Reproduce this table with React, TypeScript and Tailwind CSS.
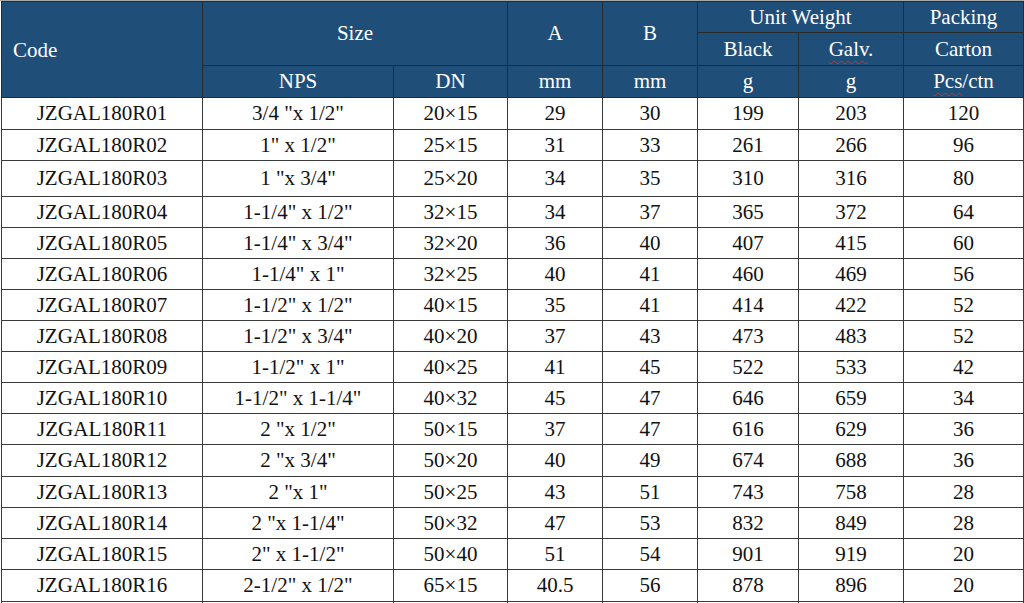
import React from "react";

const rows: [string, string, string, string, string, string, string, string, number][] = [
  ["JZGAL180R01", '3/4 "x 1/2"', "20×15", "29", "30", "199", "203", "120", 32],
  ["JZGAL180R02", '1" x 1/2"', "25×15", "31", "33", "261", "266", "96", 31],
  ["JZGAL180R03", '1 "x 3/4"', "25×20", "34", "35", "310", "316", "80", 36],
  ["JZGAL180R04", '1-1/4" x 1/2"', "32×15", "34", "37", "365", "372", "64", 31],
  ["JZGAL180R05", '1-1/4" x 3/4"', "32×20", "36", "40", "407", "415", "60", 31],
  ["JZGAL180R06", '1-1/4" x 1"', "32×25", "40", "41", "460", "469", "56", 31],
  ["JZGAL180R07", '1-1/2" x 1/2"', "40×15", "35", "41", "414", "422", "52", 31],
  ["JZGAL180R08", '1-1/2" x 3/4"', "40×20", "37", "43", "473", "483", "52", 31],
  ["JZGAL180R09", '1-1/2" x 1"', "40×25", "41", "45", "522", "533", "42", 31],
  ["JZGAL180R10", '1-1/2" x 1-1/4"', "40×32", "45", "47", "646", "659", "34", 31],
  ["JZGAL180R11", '2 "x 1/2"', "50×15", "37", "47", "616", "629", "36", 31],
  ["JZGAL180R12", '2 "x 3/4"', "50×20", "40", "49", "674", "688", "36", 32],
  ["JZGAL180R13", '2 "x 1"', "50×25", "43", "51", "743", "758", "28", 31],
  ["JZGAL180R14", '2 "x 1-1/4"', "50×32", "47", "53", "832", "849", "28", 31],
  ["JZGAL180R15", '2" x 1-1/2"', "50×40", "51", "54", "901", "919", "20", 31],
  ["JZGAL180R16", '2-1/2" x 1/2"', "65×15", "40.5", "56", "878", "896", "20", 32],
];

const serif = "font-['Liberation_Serif','Times_New_Roman',serif]";
const th = `border border-[#2a2a2a] font-normal text-white p-0 leading-none ${serif}`;
const td = `border border-[#3a3a3a] text-center text-[#111] p-0 leading-none ${serif}`;

export default function App() {
  return (
    <div className={`w-[1024px] h-[603px] overflow-hidden bg-white ${serif}`}>
      <div className="h-[1px] bg-[#a8a8a8]" />
      <table className={`table-fixed border-collapse ml-[1px] text-[21px] w-[1022px] ${serif}`}>
        <colgroup>
          <col className="w-[201px]" />
          <col className="w-[191px]" />
          <col className="w-[114px]" />
          <col className="w-[95px]" />
          <col className="w-[95px]" />
          <col className="w-[101px]" />
          <col className="w-[105px]" />
          <col className="w-[120px]" />
        </colgroup>
        <thead className="bg-[#1f4e79]">
          <tr className="h-[31px]">
            <th rowSpan={3} className={th + " text-left pl-[11px] pt-[2px]"}>
              Code
            </th>
            <th rowSpan={2} colSpan={2} className={th}>
              Size
            </th>
            <th rowSpan={2} className={th}>
              A
            </th>
            <th rowSpan={2} className={th}>
              B
            </th>
            <th colSpan={2} className={th}>
              Unit Weight
            </th>
            <th className={th}>Packing</th>
          </tr>
          <tr className="h-[33px]">
            <th className={th}>Black</th>
            <th className={th}>
              <span className="underline decoration-wavy decoration-[#c0392b] decoration-1 underline-offset-[4px]">
                Galv
              </span>
              .
            </th>
            <th className={th}>Carton</th>
          </tr>
          <tr className="h-[32px]">
            <th className={th}>NPS</th>
            <th className={th}>DN</th>
            <th className={th}>mm</th>
            <th className={th}>mm</th>
            <th className={th}>g</th>
            <th className={th}>g</th>
            <th className={th}>
              <span className="underline decoration-wavy decoration-[#c0392b] decoration-1 underline-offset-[4px]">
                Pcs
              </span>
              /ctn
            </th>
          </tr>
        </thead>
        <tbody>
          {rows.map((r) => (
            <tr key={r[0]} style={{ height: r[8] }}>
              {r.slice(0, 8).map((c, i) => (
                <td key={i} className={td}>
                  {c}
                </td>
              ))}
            </tr>
          ))}
          <tr className="h-[31px]">
            {Array.from({ length: 8 }).map((_, i) => (
              <td key={i} className={td}>
                &nbsp;
              </td>
            ))}
          </tr>
        </tbody>
      </table>
    </div>
  );
}
